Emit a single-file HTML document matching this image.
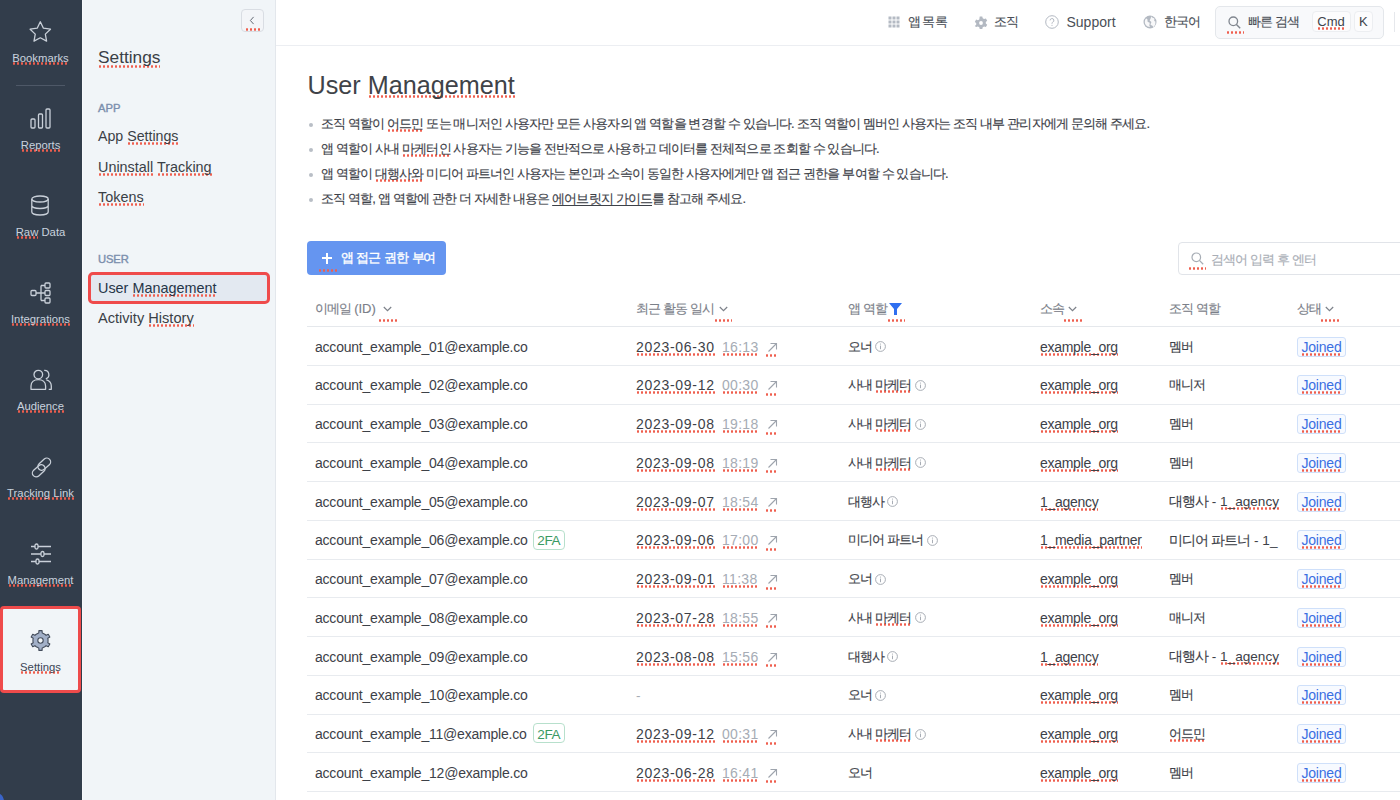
<!DOCTYPE html>
<html><head><meta charset="utf-8"><title>User Management</title>
<style>
html,body{margin:0;padding:0;}
body{width:1400px;height:800px;overflow:hidden;position:relative;background:#fff;font-family:"Liberation Sans",sans-serif;}
.b{position:absolute;}
.b svg{display:block;}
.t{position:absolute;white-space:nowrap;line-height:1.2;}
.bl{display:inline-block;width:0;height:0;vertical-align:baseline;}
.sp{padding-bottom:1px;background-image:radial-gradient(circle,#ef5e4e 1px,rgba(239,94,78,0) 1.4px);background-size:4px 3px;background-repeat:repeat-x;background-position:0 100%;}
.spd{background-image:radial-gradient(circle,#ef5e4e 1px,rgba(239,94,78,0) 1.4px);background-size:4px 3px;background-repeat:repeat-x;}
</style></head><body>
<div class='b ' style="left:0;top:0;width:82px;height:800px;background:#323d4b;"></div>
<div class='b ' style="left:82px;top:0;width:1px;height:800px;background:#f7f9fb;"></div>
<div class='b ' style="left:30px;top:21px;width:23px;height:23px;"><svg width='23' height='23' viewBox='0 0 23 23' style='overflow:visible'><path d='M10.30 0.80 L13.42 7.21 L20.48 8.19 L15.34 13.14 L16.59 20.16 L10.30 16.80 L4.01 20.16 L5.26 13.14 L0.12 8.19 L7.18 7.21Z' fill='none' stroke='#c9d0d9' stroke-width='1.3' stroke-linejoin='round'/></svg></div>
<div class='t ' style="left:0px;top:52.01px;font-size:11.3px;color:#c9d2de;width:81px;text-align:center;"><span class='sp'>Bookmarks</span></div>
<div class='b ' style="left:30px;top:108px;width:23px;height:23px;"><svg width='23' height='23' viewBox='0 0 23 23' style='overflow:visible'><g fill='none' stroke='#c9d0d9' stroke-width='1.3'><rect x='1' y='11' width='4' height='9' rx='1'/><rect x='8.5' y='6' width='4' height='14' rx='1'/><rect x='16' y='1' width='4' height='19' rx='1'/></g></svg></div>
<div class='t ' style="left:0px;top:139.01px;font-size:11.3px;color:#c9d2de;width:81px;text-align:center;"><span class='sp'>Reports</span></div>
<div class='b ' style="left:30px;top:195px;width:23px;height:23px;"><svg width='23' height='23' viewBox='0 0 23 23' style='overflow:visible'><g fill='none' stroke='#c9d0d9' stroke-width='1.3'><ellipse cx='10' cy='4' rx='8.2' ry='3'/><path d='M1.8 4v13c0 1.7 3.7 3 8.2 3s8.2-1.3 8.2-3V4M1.8 10.5c0 1.7 3.7 3 8.2 3s8.2-1.3 8.2-3'/></g></svg></div>
<div class='t ' style="left:0px;top:226.01px;font-size:11.3px;color:#c9d2de;width:81px;text-align:center;"><span class='sp'>Raw</span> Data</div>
<div class='b ' style="left:30px;top:282px;width:23px;height:23px;"><svg width='23' height='23' viewBox='0 0 23 23' style='overflow:visible'><g fill='none' stroke='#c9d0d9' stroke-width='1.3'><rect x='1' y='8.5' width='5' height='5' rx='1'/><rect x='15' y='1' width='5' height='5' rx='1'/><rect x='15' y='8.5' width='5' height='5' rx='1'/><rect x='15' y='16' width='5' height='5' rx='1'/><path d='M6 11h5M11 3.5v15M11 3.5h4M11 11h4M11 18.5h4'/></g></svg></div>
<div class='t ' style="left:0px;top:313.01px;font-size:11.3px;color:#c9d2de;width:81px;text-align:center;"><span class='sp'>Integrations</span></div>
<div class='b ' style="left:30px;top:369px;width:23px;height:23px;"><svg width='23' height='23' viewBox='0 0 23 23' style='overflow:visible'><g fill='none' stroke='#c9d0d9' stroke-width='1.3' stroke-linejoin='round'><circle cx='8.3' cy='5.6' r='4.3'/><path d='M1 20.3V17C1 13 4.2 10.6 8.3 10.6S15.6 13 15.6 17v3.3z'/><path d='M14.2 1.4a4.3 4.3 0 0 1 1.6 8.4M16.4 10.9c3 .9 4.9 3.2 4.9 6.1v3.3h-2.6'/></g></svg></div>
<div class='t ' style="left:0px;top:400.01px;font-size:11.3px;color:#c9d2de;width:81px;text-align:center;"><span class='sp'>Audience</span></div>
<div class='b ' style="left:30px;top:456px;width:23px;height:23px;"><svg width='23' height='23' viewBox='0 0 23 23' style='overflow:visible'><g fill='none' stroke='#c9d0d9' stroke-width='1.3'><rect x='7' y='4.4' width='14.5' height='7.6' rx='3.8' transform='rotate(-42 14.25 8.2)'/><rect x='1.5' y='11' width='14.5' height='7.6' rx='3.8' transform='rotate(-42 8.75 14.8)'/></g></svg></div>
<div class='t ' style="left:0px;top:487.01px;font-size:11.3px;color:#c9d2de;width:81px;text-align:center;"><span class='sp'>Tracking Link</span></div>
<div class='b ' style="left:30px;top:543px;width:23px;height:23px;"><svg width='23' height='23' viewBox='0 0 23 23' style='overflow:visible'><g fill='none' stroke='#c9d0d9' stroke-width='1.3'><path d='M1 3.5h4M8 3.5h13M1 11h10M14 11h7M1 18.5h5M9 18.5h12'/><rect x='5' y='1' width='3' height='5' rx='1.5'/><rect x='11' y='8.5' width='3' height='5' rx='1.5'/><rect x='6' y='16' width='3' height='5' rx='1.5'/></g></svg></div>
<div class='t ' style="left:0px;top:574.01px;font-size:11.3px;color:#c9d2de;width:81px;text-align:center;"><span class='sp'>Management</span></div>
<div class='b ' style="left:16px;top:84.5px;width:49px;height:1.5px;background:#4e5867;"></div>
<div class='b ' style="left:0;top:606px;width:81px;height:87px;box-sizing:border-box;border:3px solid #ef4b4b;border-radius:4px;background:#f1f5f8;"></div>
<div class='b ' style="left:29.6px;top:629.8px;width:21px;height:21px;"><svg width='21' height='21' viewBox='0 0 21 21'><path d='M7.65 3.45 L8.79 3.09 L8.94 0.62 L12.06 0.62 L12.21 3.09 L13.35 3.45 L15.18 4.51 L16.06 5.32 L18.27 4.21 L19.84 6.92 L17.77 8.28 L18.03 9.44 L18.03 11.56 L17.77 12.72 L19.84 14.08 L18.27 16.79 L16.06 15.68 L15.18 16.49 L13.35 17.55 L12.21 17.91 L12.06 20.38 L8.94 20.38 L8.79 17.91 L7.65 17.55 L5.82 16.49 L4.94 15.68 L2.73 16.79 L1.16 14.08 L3.23 12.72 L2.97 11.56 L2.97 9.44 L3.23 8.28 L1.16 6.92 L2.73 4.21 L4.94 5.32 L5.82 4.51Z' fill='#a2b0c8' stroke='#434c5b' stroke-width='1.1' stroke-linejoin='round'/><circle cx='10.5' cy='10.5' r='2.7' fill='#f1f5f8' stroke='#434c5b' stroke-width='1.1'/></svg></div>
<div class='b ' style="left:-12px;top:793px;width:16px;height:16px;border-radius:50%;background:#3a64c8;"></div>
<div class='t ' style="left:0px;top:661.01px;font-size:11.3px;color:#3b4656;width:81px;text-align:center;"><span class='sp'>Settings</span></div>
<div class='b ' style="left:83px;top:0;width:192px;height:800px;background:#f1f5f8;"></div>
<div class='b ' style="left:275px;top:0;width:1px;height:800px;background:#e3e7ec;"></div>
<div class='b ' style="left:241px;top:9px;width:23px;height:23px;box-sizing:border-box;border:1px solid #d9dde3;border-radius:4px;background:#f3f5f8;"><svg width='21' height='21' viewBox='0 0 21 21' style='position:absolute;left:0;top:0'><path d='M11.6 6.9L8.4 10.5l3.2 3.6' fill='none' stroke='#646a75' stroke-width='1'/></svg></div>
<div class='b spd' style="left:244.5px;top:28px;width:16px;height:3px;"></div>
<div class='t ' style="left:98px;top:47.00px;font-size:17.3px;color:#3a3f46;"><span class='sp'>Settings</span></div>
<div class='t ' style="left:98px;top:101.51px;font-size:11.2px;color:#7b8fad;-webkit-text-stroke:0.4px #7b8fad;letter-spacing:0.1px;">APP</div>
<div class='t ' style="left:98px;top:128.01px;font-size:14.2px;color:#3a3f46;">App <span class='sp'>Settings</span></div>
<div class='t ' style="left:98px;top:158.51px;font-size:14.4px;color:#3a3f46;"><span class='sp'>Uninstall</span> <span class='sp'>Tracking</span></div>
<div class='t ' style="left:98px;top:189.01px;font-size:14.4px;color:#3a3f46;"><span class='sp'>Tokens</span></div>
<div class='t ' style="left:98px;top:253.01px;font-size:11.2px;color:#7b8fad;-webkit-text-stroke:0.4px #7b8fad;letter-spacing:-0.1px;">USER</div>
<div class='b ' style="left:88px;top:272px;width:182px;height:32px;box-sizing:border-box;border:3px solid #ef4b4b;border-radius:5px;background:#e3e9f1;"></div>
<div class='t ' style="left:98px;top:279.51px;font-size:14.4px;color:#263548;">User <span class='sp'>Management</span></div>
<div class='t ' style="left:98px;top:310.01px;font-size:14.6px;color:#3a3f46;">Activity <span class='sp'>History</span></div>
<div class='b ' style="left:276px;top:45px;width:1124px;height:1px;background:#eceef2;"></div>
<div class='b ' style="left:888px;top:16px;width:12px;height:12px;"><svg width='12' height='12' viewBox='0 0 12 12' fill='#b4bac3'><rect x='0.5' y='0.5' width='3' height='3'/><rect x='0.5' y='4.5' width='3' height='3'/><rect x='0.5' y='8.5' width='3' height='3'/><rect x='4.5' y='0.5' width='3' height='3'/><rect x='4.5' y='4.5' width='3' height='3'/><rect x='4.5' y='8.5' width='3' height='3'/><rect x='8.5' y='0.5' width='3' height='3'/><rect x='8.5' y='4.5' width='3' height='3'/><rect x='8.5' y='8.5' width='3' height='3'/></svg></div>
<div class='t ' style="left:907.5px;top:13.71px;font-size:13px;color:#4a4f57;letter-spacing:-0.86px;-webkit-text-stroke:0.15px currentColor;">앱 목록</div>
<div class='b ' style="left:973.5px;top:15.5px;width:14px;height:14px;"><svg width='14' height='14' viewBox='0 0 14 14'><path d='M5.7.5h2.6l.4 1.8 1.4.8 1.8-.6 1.3 2.3-1.4 1.2v1.6l1.4 1.2-1.3 2.3-1.8-.6-1.4.8-.4 1.8H5.7l-.4-1.8-1.4-.8-1.8.6L.8 9.9l1.4-1.2V7.1L.8 5.9l1.3-2.3 1.8.6 1.4-.8z' fill='#b3b9c2'/><circle cx='7' cy='7' r='1.9' fill='#fff'/></svg></div>
<div class='t ' style="left:994px;top:13.71px;font-size:13px;color:#4a4f57;letter-spacing:-0.86px;-webkit-text-stroke:0.15px currentColor;">조직</div>
<div class='b ' style="left:1045px;top:15px;width:14px;height:14px;"><svg width='14' height='14' viewBox='0 0 14 14'><circle cx='7' cy='7' r='6.3' fill='none' stroke='#b3b9c2' stroke-width='1'/><path d='M5.1 5.4a1.9 1.9 0 1 1 2.6 1.8c-.5.2-.7.6-.7 1.1v.5' fill='none' stroke='#b3b9c2' stroke-width='1'/><circle cx='7' cy='10.3' r='.6' fill='#b3b9c2'/></svg></div>
<div class='t ' style="left:1066.5px;top:13.51px;font-size:14px;color:#4a4f57;">Support</div>
<div class='b ' style="left:1142.5px;top:15px;width:14px;height:14px;"><svg width='14' height='14' viewBox='0 0 14 14'><circle cx='7' cy='7' r='6.5' fill='#b3b9c2'/><path d='M3 3.5c1.2.3 1.8 1.2 1.5 2.2-.3.9.6 1.5 1.4 1.6.9.2 1 1.3.6 2.1-.4.8.1 1.8.9 2.6-2.3 0-4.7-1.4-5.4-3.6C1.5 6.6 2 4.8 3 3.5zM8.5 1.2c.3 1 .9 1.6 1.9 1.7 1 .1 1.3 1.1.9 2-.3.7.2 1.5 1 1.4.5 2.4-.2 4.5-2 6-.2-1.1-.9-1.8-1.9-2-1-.3-1-1.4-.4-2.1.5-.7.3-1.7-.5-2-.8-.3-1-1.2-.4-1.8.4-.4.6-.8.5-1.2z' fill='#fff' opacity='.9'/></svg></div>
<div class='t ' style="left:1163.5px;top:13.71px;font-size:13px;color:#4a4f57;letter-spacing:-0.86px;-webkit-text-stroke:0.15px currentColor;">한국어</div>
<div class='b ' style="left:1215px;top:5.5px;width:169px;height:33px;box-sizing:border-box;border:1px solid #e4e7eb;border-radius:5px;background:#f8f9fb;"></div>
<div class='b ' style="left:1227.5px;top:15.5px;width:13px;height:13px;"><svg width='13' height='13' viewBox='0 0 13 13'><circle cx='5.3' cy='5.3' r='4.3' fill='none' stroke='#80868f' stroke-width='1.3'/><path d='M8.4 8.4l3.8 3.8' stroke='#80868f' stroke-width='1.4'/></svg></div>
<div class='b spd' style="left:1226px;top:31px;width:18px;height:3px;"></div>
<div class='t ' style="left:1248px;top:13.71px;font-size:13px;color:#4a4f57;letter-spacing:-0.86px;-webkit-text-stroke:0.15px currentColor;">빠른 검색</div>
<div class='b ' style="left:1311.5px;top:11px;width:39px;height:21px;box-sizing:border-box;border:1px solid #eceef1;border-radius:4px;background:#fcfcfd;"></div>
<div class='t ' style="left:1311.5px;top:14.01px;font-size:13px;color:#3f444b;width:39px;text-align:center;"><span class='sp'>Cmd</span></div>
<div class='b ' style="left:1354px;top:11px;width:18.5px;height:21px;box-sizing:border-box;border:1px solid #eceef1;border-radius:4px;background:#fcfcfd;"></div>
<div class='t ' style="left:1354px;top:14.01px;font-size:13px;color:#3f444b;width:18.5px;text-align:center;">K</div>
<div class='b ' style="left:1394px;top:11.5px;width:1px;height:20px;background:#e6e8ec;"></div>
<div class='t ' style="left:307.5px;top:70.30px;font-size:25.2px;color:#404348;">User <span class="sp" style="padding-bottom:0;background-position:0 calc(100% - 1.5px)">Management</span></div>
<div class='b ' style="left:308.5px;top:122.7px;width:4px;height:4px;border-radius:50%;background:#b9bec6;"></div>
<div class='t ' style="left:321px;top:116.21px;font-size:13px;color:#3d4148;letter-spacing:-0.86px;-webkit-text-stroke:0.15px currentColor;">조직 역할이 <span class='sp'>어드민</span> 또는 매니저인 사용자만 모든 사용자의 앱 역할을 변경할 수 있습니다. 조직 역할이 멤버인 사용자는 조직 내부 관리자에게 문의해 주세요.</div>
<div class='b ' style="left:308.5px;top:147.7px;width:4px;height:4px;border-radius:50%;background:#b9bec6;"></div>
<div class='t ' style="left:321px;top:141.21px;font-size:13px;color:#3d4148;letter-spacing:-0.86px;-webkit-text-stroke:0.15px currentColor;">앱 역할이 사내 <span class='sp'>마케터인</span> 사용자는 기능을 전반적으로 사용하고 데이터를 전체적으로 조회할 수 있습니다.</div>
<div class='b ' style="left:308.5px;top:172.7px;width:4px;height:4px;border-radius:50%;background:#b9bec6;"></div>
<div class='t ' style="left:321px;top:166.21px;font-size:13px;color:#3d4148;letter-spacing:-0.86px;-webkit-text-stroke:0.15px currentColor;">앱 역할이 <span class='sp'>대행사와</span> 미디어 파트너인 사용자는 본인과 소속이 동일한 사용자에게만 앱 접근 권한을 부여할 수 있습니다.</div>
<div class='b ' style="left:308.5px;top:197.7px;width:4px;height:4px;border-radius:50%;background:#b9bec6;"></div>
<div class='t ' style="left:321px;top:191.21px;font-size:13px;color:#3d4148;letter-spacing:-0.86px;-webkit-text-stroke:0.15px currentColor;">조직 역할, 앱 역할에 관한 더 자세한 내용은 <span style="text-decoration:underline;text-underline-offset:2px">에어브릿지 가이드</span>를 참고해 주세요.</div>
<div class='b ' style="left:307px;top:241px;width:139px;height:34px;border-radius:4px;background:#6595f0;"></div>
<div class='b ' style="left:321.5px;top:257.4px;width:10.5px;height:1.6px;background:#fff;"></div>
<div class='b ' style="left:325.95px;top:253px;width:1.6px;height:10.5px;background:#fff;"></div>
<div class='b spd' style="left:317.5px;top:268.5px;width:20px;height:3px;"></div>
<div class='t ' style="left:340.5px;top:250.21px;font-size:13px;color:#ffffff;letter-spacing:-1.2px;word-spacing:1.6px;-webkit-text-stroke:0.35px #fff;">앱 접근 권한 부여</div>
<div class='b ' style="left:1177.5px;top:242px;width:240px;height:32.5px;box-sizing:border-box;border:1px solid #e1e4e9;border-radius:4px;background:#fff;"></div>
<div class='b ' style="left:1190.5px;top:252px;width:13px;height:13px;"><svg width='13' height='13' viewBox='0 0 13 13'><circle cx='5.3' cy='5.3' r='4.3' fill='none' stroke='#a7adb5' stroke-width='1.2'/><path d='M8.4 8.4l3.8 3.8' stroke='#a7adb5' stroke-width='1.3'/></svg></div>
<div class='b spd' style="left:1187.5px;top:267px;width:18.5px;height:3px;"></div>
<div class='t ' style="left:1210.5px;top:251.51px;font-size:13px;color:#a9aeb6;letter-spacing:-0.86px;-webkit-text-stroke:0.15px currentColor;">검색어 입력 후 엔터</div>
<div class='t ' style="left:315px;top:301.21px;font-size:13px;color:#7b8089;letter-spacing:-0.86px;-webkit-text-stroke:0.15px currentColor;">이메일 <span style="letter-spacing:0">(ID)</span></div>
<div class='t ' style="left:636px;top:301.21px;font-size:13px;color:#7b8089;letter-spacing:-0.86px;-webkit-text-stroke:0.15px currentColor;">최근 활동 일시</div>
<div class='t ' style="left:848px;top:301.21px;font-size:13px;color:#7b8089;letter-spacing:-0.86px;-webkit-text-stroke:0.15px currentColor;">앱 역할</div>
<div class='t ' style="left:1040px;top:301.21px;font-size:13px;color:#7b8089;letter-spacing:-0.86px;-webkit-text-stroke:0.15px currentColor;">소속</div>
<div class='t ' style="left:1168.5px;top:301.21px;font-size:13px;color:#7b8089;letter-spacing:-0.86px;-webkit-text-stroke:0.15px currentColor;">조직 역할</div>
<div class='t ' style="left:1297px;top:301.21px;font-size:13px;color:#7b8089;letter-spacing:-0.86px;-webkit-text-stroke:0.15px currentColor;">상태</div>
<div class='b ' style="left:383px;top:306px;width:9px;height:6px;"><svg width='9' height='6' viewBox='0 0 9 6'><path d='M.8 1l3.7 3.7L8.2 1' fill='none' stroke='#7d828a' stroke-width='1.2'/></svg></div>
<div class='b spd' style="left:378px;top:318.5px;width:18.5px;height:3px;"></div>
<div class='b ' style="left:718.5px;top:306px;width:9px;height:6px;"><svg width='9' height='6' viewBox='0 0 9 6'><path d='M.8 1l3.7 3.7L8.2 1' fill='none' stroke='#7d828a' stroke-width='1.2'/></svg></div>
<div class='b spd' style="left:713.5px;top:318.5px;width:18.5px;height:3px;"></div>
<div class='b ' style="left:1068px;top:306px;width:9px;height:6px;"><svg width='9' height='6' viewBox='0 0 9 6'><path d='M.8 1l3.7 3.7L8.2 1' fill='none' stroke='#7d828a' stroke-width='1.2'/></svg></div>
<div class='b spd' style="left:1063px;top:318.5px;width:18.5px;height:3px;"></div>
<div class='b ' style="left:1325px;top:306px;width:9px;height:6px;"><svg width='9' height='6' viewBox='0 0 9 6'><path d='M.8 1l3.7 3.7L8.2 1' fill='none' stroke='#7d828a' stroke-width='1.2'/></svg></div>
<div class='b spd' style="left:1320px;top:318.5px;width:18.5px;height:3px;"></div>
<div class='b ' style="left:889px;top:302.5px;width:13px;height:12px;"><svg width='13' height='12' viewBox='0 0 13 12'><path d='M0 0h13L8 6v6H5V6z' fill='#2f6ff0'/></svg></div>
<div class='b spd' style="left:886.5px;top:318.5px;width:18.5px;height:3px;"></div>
<div class='b ' style="left:307px;top:326px;width:1093px;height:1px;background:#e5e8ec;"></div>
<div class='t ' style="left:315px;top:338.51px;font-size:14px;color:#3d4148;letter-spacing:-0.22px;">account_example_01@example.co</div>
<div class='t ' style="left:636px;top:338.51px;font-size:14px;color:#3d4148;letter-spacing:0.7px;"><span class='sp'>2023-06-30</span></div>
<div class='t ' style="left:722px;top:338.51px;font-size:14px;color:#a6acb5;letter-spacing:0.3px;"><span class='sp'>16:13</span></div>
<div class='b ' style="left:766.5px;top:341.50px;width:11px;height:11px;"><svg width='11' height='11' viewBox='0 0 11 11'><path d='M1.5 9.5L9.5 1.5M3.5 1.5h6v6' fill='none' stroke='#9ea4ad' stroke-width='1.1'/></svg></div>
<div class='b spd' style="left:765px;top:354.00px;width:13px;height:3px;"></div>
<div class='t ' style="left:848px;top:338.51px;font-size:13px;color:#3d4148;letter-spacing:-0.86px;-webkit-text-stroke:0.15px currentColor;">오너</div>
<div class='b ' style="left:875.2px;top:341.20px;width:11px;height:11px;"><svg width='11' height='11' viewBox='0 0 11 11' style=''><circle cx='5.5' cy='5.5' r='4.9' fill='none' stroke='#9ea4ad' stroke-width='.9'/><path d='M5.5 4.6v3.6' stroke='#9ea4ad' stroke-width='.9'/><circle cx='5.5' cy='3' r='.6' fill='#9ea4ad'/></svg></div>
<div class='t ' style="left:1040px;top:338.51px;font-size:14px;color:#3d4148;letter-spacing:-0.29px;"><span class='sp'>example_org</span></div>
<div class='t ' style="left:1168.5px;top:338.51px;font-size:13px;color:#3d4148;letter-spacing:-0.86px;-webkit-text-stroke:0.15px currentColor;">멤버</div>
<div class='b ' style="left:1297px;top:336.50px;width:49px;height:20px;box-sizing:border-box;border:1px solid #cfe0fa;border-radius:3px;background:#f7faff;"></div>
<div class='t ' style="left:1297px;top:338.51px;font-size:14px;color:#3a6fe2;width:49px;text-align:center;letter-spacing:-0.2px;"><span class='sp'>Joined</span></div>
<div class='b ' style="left:307px;top:364.75px;width:1093px;height:1px;background:#e8ebef;"></div>
<div class='t ' style="left:315px;top:377.26px;font-size:14px;color:#3d4148;letter-spacing:-0.22px;">account_example_02@example.co</div>
<div class='t ' style="left:636px;top:377.26px;font-size:14px;color:#3d4148;letter-spacing:0.7px;"><span class='sp'>2023-09-12</span></div>
<div class='t ' style="left:722px;top:377.26px;font-size:14px;color:#a6acb5;letter-spacing:0.3px;"><span class='sp'>00:30</span></div>
<div class='b ' style="left:766.5px;top:380.25px;width:11px;height:11px;"><svg width='11' height='11' viewBox='0 0 11 11'><path d='M1.5 9.5L9.5 1.5M3.5 1.5h6v6' fill='none' stroke='#9ea4ad' stroke-width='1.1'/></svg></div>
<div class='b spd' style="left:765px;top:392.75px;width:13px;height:3px;"></div>
<div class='t ' style="left:848px;top:377.26px;font-size:13px;color:#3d4148;letter-spacing:-0.86px;-webkit-text-stroke:0.15px currentColor;">사내 <span class='sp'>마케터</span></div>
<div class='b ' style="left:914.6px;top:379.95px;width:11px;height:11px;"><svg width='11' height='11' viewBox='0 0 11 11' style=''><circle cx='5.5' cy='5.5' r='4.9' fill='none' stroke='#9ea4ad' stroke-width='.9'/><path d='M5.5 4.6v3.6' stroke='#9ea4ad' stroke-width='.9'/><circle cx='5.5' cy='3' r='.6' fill='#9ea4ad'/></svg></div>
<div class='t ' style="left:1040px;top:377.26px;font-size:14px;color:#3d4148;letter-spacing:-0.29px;"><span class='sp'>example_org</span></div>
<div class='t ' style="left:1168.5px;top:377.26px;font-size:13px;color:#3d4148;letter-spacing:-0.86px;-webkit-text-stroke:0.15px currentColor;">매니저</div>
<div class='b ' style="left:1297px;top:375.25px;width:49px;height:20px;box-sizing:border-box;border:1px solid #cfe0fa;border-radius:3px;background:#f7faff;"></div>
<div class='t ' style="left:1297px;top:377.26px;font-size:14px;color:#3a6fe2;width:49px;text-align:center;letter-spacing:-0.2px;"><span class='sp'>Joined</span></div>
<div class='b ' style="left:307px;top:403.50px;width:1093px;height:1px;background:#e8ebef;"></div>
<div class='t ' style="left:315px;top:416.01px;font-size:14px;color:#3d4148;letter-spacing:-0.22px;">account_example_03@example.co</div>
<div class='t ' style="left:636px;top:416.01px;font-size:14px;color:#3d4148;letter-spacing:0.7px;"><span class='sp'>2023-09-08</span></div>
<div class='t ' style="left:722px;top:416.01px;font-size:14px;color:#a6acb5;letter-spacing:0.3px;"><span class='sp'>19:18</span></div>
<div class='b ' style="left:766.5px;top:419.00px;width:11px;height:11px;"><svg width='11' height='11' viewBox='0 0 11 11'><path d='M1.5 9.5L9.5 1.5M3.5 1.5h6v6' fill='none' stroke='#9ea4ad' stroke-width='1.1'/></svg></div>
<div class='b spd' style="left:765px;top:431.50px;width:13px;height:3px;"></div>
<div class='t ' style="left:848px;top:416.01px;font-size:13px;color:#3d4148;letter-spacing:-0.86px;-webkit-text-stroke:0.15px currentColor;">사내 <span class='sp'>마케터</span></div>
<div class='b ' style="left:914.6px;top:418.70px;width:11px;height:11px;"><svg width='11' height='11' viewBox='0 0 11 11' style=''><circle cx='5.5' cy='5.5' r='4.9' fill='none' stroke='#9ea4ad' stroke-width='.9'/><path d='M5.5 4.6v3.6' stroke='#9ea4ad' stroke-width='.9'/><circle cx='5.5' cy='3' r='.6' fill='#9ea4ad'/></svg></div>
<div class='t ' style="left:1040px;top:416.01px;font-size:14px;color:#3d4148;letter-spacing:-0.29px;"><span class='sp'>example_org</span></div>
<div class='t ' style="left:1168.5px;top:416.01px;font-size:13px;color:#3d4148;letter-spacing:-0.86px;-webkit-text-stroke:0.15px currentColor;">멤버</div>
<div class='b ' style="left:1297px;top:414.00px;width:49px;height:20px;box-sizing:border-box;border:1px solid #cfe0fa;border-radius:3px;background:#f7faff;"></div>
<div class='t ' style="left:1297px;top:416.01px;font-size:14px;color:#3a6fe2;width:49px;text-align:center;letter-spacing:-0.2px;"><span class='sp'>Joined</span></div>
<div class='b ' style="left:307px;top:442.25px;width:1093px;height:1px;background:#e8ebef;"></div>
<div class='t ' style="left:315px;top:454.76px;font-size:14px;color:#3d4148;letter-spacing:-0.22px;">account_example_04@example.co</div>
<div class='t ' style="left:636px;top:454.76px;font-size:14px;color:#3d4148;letter-spacing:0.7px;"><span class='sp'>2023-09-08</span></div>
<div class='t ' style="left:722px;top:454.76px;font-size:14px;color:#a6acb5;letter-spacing:0.3px;"><span class='sp'>18:19</span></div>
<div class='b ' style="left:766.5px;top:457.75px;width:11px;height:11px;"><svg width='11' height='11' viewBox='0 0 11 11'><path d='M1.5 9.5L9.5 1.5M3.5 1.5h6v6' fill='none' stroke='#9ea4ad' stroke-width='1.1'/></svg></div>
<div class='b spd' style="left:765px;top:470.25px;width:13px;height:3px;"></div>
<div class='t ' style="left:848px;top:454.76px;font-size:13px;color:#3d4148;letter-spacing:-0.86px;-webkit-text-stroke:0.15px currentColor;">사내 <span class='sp'>마케터</span></div>
<div class='b ' style="left:914.6px;top:457.45px;width:11px;height:11px;"><svg width='11' height='11' viewBox='0 0 11 11' style=''><circle cx='5.5' cy='5.5' r='4.9' fill='none' stroke='#9ea4ad' stroke-width='.9'/><path d='M5.5 4.6v3.6' stroke='#9ea4ad' stroke-width='.9'/><circle cx='5.5' cy='3' r='.6' fill='#9ea4ad'/></svg></div>
<div class='t ' style="left:1040px;top:454.76px;font-size:14px;color:#3d4148;letter-spacing:-0.29px;"><span class='sp'>example_org</span></div>
<div class='t ' style="left:1168.5px;top:454.76px;font-size:13px;color:#3d4148;letter-spacing:-0.86px;-webkit-text-stroke:0.15px currentColor;">멤버</div>
<div class='b ' style="left:1297px;top:452.75px;width:49px;height:20px;box-sizing:border-box;border:1px solid #cfe0fa;border-radius:3px;background:#f7faff;"></div>
<div class='t ' style="left:1297px;top:454.76px;font-size:14px;color:#3a6fe2;width:49px;text-align:center;letter-spacing:-0.2px;"><span class='sp'>Joined</span></div>
<div class='b ' style="left:307px;top:481.00px;width:1093px;height:1px;background:#e8ebef;"></div>
<div class='t ' style="left:315px;top:493.51px;font-size:14px;color:#3d4148;letter-spacing:-0.22px;">account_example_05@example.co</div>
<div class='t ' style="left:636px;top:493.51px;font-size:14px;color:#3d4148;letter-spacing:0.7px;"><span class='sp'>2023-09-07</span></div>
<div class='t ' style="left:722px;top:493.51px;font-size:14px;color:#a6acb5;letter-spacing:0.3px;"><span class='sp'>18:54</span></div>
<div class='b ' style="left:766.5px;top:496.50px;width:11px;height:11px;"><svg width='11' height='11' viewBox='0 0 11 11'><path d='M1.5 9.5L9.5 1.5M3.5 1.5h6v6' fill='none' stroke='#9ea4ad' stroke-width='1.1'/></svg></div>
<div class='b spd' style="left:765px;top:509.00px;width:13px;height:3px;"></div>
<div class='t ' style="left:848px;top:493.51px;font-size:13px;color:#3d4148;letter-spacing:-0.86px;-webkit-text-stroke:0.15px currentColor;">대행사</div>
<div class='b ' style="left:886.95px;top:496.20px;width:11px;height:11px;"><svg width='11' height='11' viewBox='0 0 11 11' style=''><circle cx='5.5' cy='5.5' r='4.9' fill='none' stroke='#9ea4ad' stroke-width='.9'/><path d='M5.5 4.6v3.6' stroke='#9ea4ad' stroke-width='.9'/><circle cx='5.5' cy='3' r='.6' fill='#9ea4ad'/></svg></div>
<div class='t ' style="left:1040px;top:493.51px;font-size:14px;color:#3d4148;letter-spacing:-0.29px;"><span class='sp'>1_agency</span></div>
<div class='t ' style="left:1168.5px;top:494.00px;font-size:13.6px;color:#3d4148;"><span style="letter-spacing:-0.86px;-webkit-text-stroke:0.15px currentColor;">대행사</span> - <span class='sp'>1_agency</span></div>
<div class='b ' style="left:1297px;top:491.50px;width:49px;height:20px;box-sizing:border-box;border:1px solid #cfe0fa;border-radius:3px;background:#f7faff;"></div>
<div class='t ' style="left:1297px;top:493.51px;font-size:14px;color:#3a6fe2;width:49px;text-align:center;letter-spacing:-0.2px;"><span class='sp'>Joined</span></div>
<div class='b ' style="left:307px;top:519.75px;width:1093px;height:1px;background:#e8ebef;"></div>
<div class='t ' style="left:315px;top:532.26px;font-size:14px;color:#3d4148;letter-spacing:-0.22px;">account_example_06@example.co</div>
<div class='b ' style="left:533px;top:529.55px;width:31.5px;height:20px;box-sizing:border-box;border:1px solid #b7e0cc;border-radius:4px;background:#fff;"></div>
<div class='t ' style="left:533px;top:532.96px;font-size:13.5px;color:#3a9a62;width:31.5px;text-align:center;letter-spacing:-0.3px;">2FA</div>
<div class='t ' style="left:636px;top:532.26px;font-size:14px;color:#3d4148;letter-spacing:0.7px;"><span class='sp'>2023-09-06</span></div>
<div class='t ' style="left:722px;top:532.26px;font-size:14px;color:#a6acb5;letter-spacing:0.3px;"><span class='sp'>17:00</span></div>
<div class='b ' style="left:766.5px;top:535.25px;width:11px;height:11px;"><svg width='11' height='11' viewBox='0 0 11 11'><path d='M1.5 9.5L9.5 1.5M3.5 1.5h6v6' fill='none' stroke='#9ea4ad' stroke-width='1.1'/></svg></div>
<div class='b spd' style="left:765px;top:547.75px;width:13px;height:3px;"></div>
<div class='t ' style="left:848px;top:532.26px;font-size:13px;color:#3d4148;letter-spacing:-0.86px;-webkit-text-stroke:0.15px currentColor;">미디어 파트너</div>
<div class='b ' style="left:926.7px;top:534.95px;width:11px;height:11px;"><svg width='11' height='11' viewBox='0 0 11 11' style=''><circle cx='5.5' cy='5.5' r='4.9' fill='none' stroke='#9ea4ad' stroke-width='.9'/><path d='M5.5 4.6v3.6' stroke='#9ea4ad' stroke-width='.9'/><circle cx='5.5' cy='3' r='.6' fill='#9ea4ad'/></svg></div>
<div class='t ' style="left:1040px;top:532.26px;font-size:14px;color:#3d4148;letter-spacing:-0.29px;"><span class='sp'>1_media_partner</span></div>
<div class='t ' style="left:1168.5px;top:532.75px;font-size:13.6px;color:#3d4148;"><span style="letter-spacing:-0.86px;-webkit-text-stroke:0.15px currentColor;">미디어 파트너</span> - 1_</div>
<div class='b ' style="left:1297px;top:530.25px;width:49px;height:20px;box-sizing:border-box;border:1px solid #cfe0fa;border-radius:3px;background:#f7faff;"></div>
<div class='t ' style="left:1297px;top:532.26px;font-size:14px;color:#3a6fe2;width:49px;text-align:center;letter-spacing:-0.2px;"><span class='sp'>Joined</span></div>
<div class='b ' style="left:307px;top:558.50px;width:1093px;height:1px;background:#e8ebef;"></div>
<div class='t ' style="left:315px;top:571.01px;font-size:14px;color:#3d4148;letter-spacing:-0.22px;">account_example_07@example.co</div>
<div class='t ' style="left:636px;top:571.01px;font-size:14px;color:#3d4148;letter-spacing:0.7px;"><span class='sp'>2023-09-01</span></div>
<div class='t ' style="left:722px;top:571.01px;font-size:14px;color:#a6acb5;letter-spacing:0.3px;"><span class='sp'>11:38</span></div>
<div class='b ' style="left:766.5px;top:574.00px;width:11px;height:11px;"><svg width='11' height='11' viewBox='0 0 11 11'><path d='M1.5 9.5L9.5 1.5M3.5 1.5h6v6' fill='none' stroke='#9ea4ad' stroke-width='1.1'/></svg></div>
<div class='b spd' style="left:765px;top:586.50px;width:13px;height:3px;"></div>
<div class='t ' style="left:848px;top:571.01px;font-size:13px;color:#3d4148;letter-spacing:-0.86px;-webkit-text-stroke:0.15px currentColor;">오너</div>
<div class='b ' style="left:875.2px;top:573.70px;width:11px;height:11px;"><svg width='11' height='11' viewBox='0 0 11 11' style=''><circle cx='5.5' cy='5.5' r='4.9' fill='none' stroke='#9ea4ad' stroke-width='.9'/><path d='M5.5 4.6v3.6' stroke='#9ea4ad' stroke-width='.9'/><circle cx='5.5' cy='3' r='.6' fill='#9ea4ad'/></svg></div>
<div class='t ' style="left:1040px;top:571.01px;font-size:14px;color:#3d4148;letter-spacing:-0.29px;"><span class='sp'>example_org</span></div>
<div class='t ' style="left:1168.5px;top:571.01px;font-size:13px;color:#3d4148;letter-spacing:-0.86px;-webkit-text-stroke:0.15px currentColor;">멤버</div>
<div class='b ' style="left:1297px;top:569.00px;width:49px;height:20px;box-sizing:border-box;border:1px solid #cfe0fa;border-radius:3px;background:#f7faff;"></div>
<div class='t ' style="left:1297px;top:571.01px;font-size:14px;color:#3a6fe2;width:49px;text-align:center;letter-spacing:-0.2px;"><span class='sp'>Joined</span></div>
<div class='b ' style="left:307px;top:597.25px;width:1093px;height:1px;background:#e8ebef;"></div>
<div class='t ' style="left:315px;top:609.76px;font-size:14px;color:#3d4148;letter-spacing:-0.22px;">account_example_08@example.co</div>
<div class='t ' style="left:636px;top:609.76px;font-size:14px;color:#3d4148;letter-spacing:0.7px;"><span class='sp'>2023-07-28</span></div>
<div class='t ' style="left:722px;top:609.76px;font-size:14px;color:#a6acb5;letter-spacing:0.3px;"><span class='sp'>18:55</span></div>
<div class='b ' style="left:766.5px;top:612.75px;width:11px;height:11px;"><svg width='11' height='11' viewBox='0 0 11 11'><path d='M1.5 9.5L9.5 1.5M3.5 1.5h6v6' fill='none' stroke='#9ea4ad' stroke-width='1.1'/></svg></div>
<div class='b spd' style="left:765px;top:625.25px;width:13px;height:3px;"></div>
<div class='t ' style="left:848px;top:609.76px;font-size:13px;color:#3d4148;letter-spacing:-0.86px;-webkit-text-stroke:0.15px currentColor;">사내 <span class='sp'>마케터</span></div>
<div class='b ' style="left:914.6px;top:612.45px;width:11px;height:11px;"><svg width='11' height='11' viewBox='0 0 11 11' style=''><circle cx='5.5' cy='5.5' r='4.9' fill='none' stroke='#9ea4ad' stroke-width='.9'/><path d='M5.5 4.6v3.6' stroke='#9ea4ad' stroke-width='.9'/><circle cx='5.5' cy='3' r='.6' fill='#9ea4ad'/></svg></div>
<div class='t ' style="left:1040px;top:609.76px;font-size:14px;color:#3d4148;letter-spacing:-0.29px;"><span class='sp'>example_org</span></div>
<div class='t ' style="left:1168.5px;top:609.76px;font-size:13px;color:#3d4148;letter-spacing:-0.86px;-webkit-text-stroke:0.15px currentColor;">매니저</div>
<div class='b ' style="left:1297px;top:607.75px;width:49px;height:20px;box-sizing:border-box;border:1px solid #cfe0fa;border-radius:3px;background:#f7faff;"></div>
<div class='t ' style="left:1297px;top:609.76px;font-size:14px;color:#3a6fe2;width:49px;text-align:center;letter-spacing:-0.2px;"><span class='sp'>Joined</span></div>
<div class='b ' style="left:307px;top:636.00px;width:1093px;height:1px;background:#e8ebef;"></div>
<div class='t ' style="left:315px;top:648.51px;font-size:14px;color:#3d4148;letter-spacing:-0.22px;">account_example_09@example.co</div>
<div class='t ' style="left:636px;top:648.51px;font-size:14px;color:#3d4148;letter-spacing:0.7px;"><span class='sp'>2023-08-08</span></div>
<div class='t ' style="left:722px;top:648.51px;font-size:14px;color:#a6acb5;letter-spacing:0.3px;"><span class='sp'>15:56</span></div>
<div class='b ' style="left:766.5px;top:651.50px;width:11px;height:11px;"><svg width='11' height='11' viewBox='0 0 11 11'><path d='M1.5 9.5L9.5 1.5M3.5 1.5h6v6' fill='none' stroke='#9ea4ad' stroke-width='1.1'/></svg></div>
<div class='b spd' style="left:765px;top:664.00px;width:13px;height:3px;"></div>
<div class='t ' style="left:848px;top:648.51px;font-size:13px;color:#3d4148;letter-spacing:-0.86px;-webkit-text-stroke:0.15px currentColor;">대행사</div>
<div class='b ' style="left:886.95px;top:651.20px;width:11px;height:11px;"><svg width='11' height='11' viewBox='0 0 11 11' style=''><circle cx='5.5' cy='5.5' r='4.9' fill='none' stroke='#9ea4ad' stroke-width='.9'/><path d='M5.5 4.6v3.6' stroke='#9ea4ad' stroke-width='.9'/><circle cx='5.5' cy='3' r='.6' fill='#9ea4ad'/></svg></div>
<div class='t ' style="left:1040px;top:648.51px;font-size:14px;color:#3d4148;letter-spacing:-0.29px;"><span class='sp'>1_agency</span></div>
<div class='t ' style="left:1168.5px;top:649.00px;font-size:13.6px;color:#3d4148;"><span style="letter-spacing:-0.86px;-webkit-text-stroke:0.15px currentColor;">대행사</span> - <span class='sp'>1_agency</span></div>
<div class='b ' style="left:1297px;top:646.50px;width:49px;height:20px;box-sizing:border-box;border:1px solid #cfe0fa;border-radius:3px;background:#f7faff;"></div>
<div class='t ' style="left:1297px;top:648.51px;font-size:14px;color:#3a6fe2;width:49px;text-align:center;letter-spacing:-0.2px;"><span class='sp'>Joined</span></div>
<div class='b ' style="left:307px;top:674.75px;width:1093px;height:1px;background:#e8ebef;"></div>
<div class='t ' style="left:315px;top:687.26px;font-size:14px;color:#3d4148;letter-spacing:-0.22px;">account_example_10@example.co</div>
<div class='t ' style="left:636px;top:688.25px;font-size:13.6px;color:#a6acb5;">-</div>
<div class='t ' style="left:848px;top:687.26px;font-size:13px;color:#3d4148;letter-spacing:-0.86px;-webkit-text-stroke:0.15px currentColor;">오너</div>
<div class='b ' style="left:875.2px;top:689.95px;width:11px;height:11px;"><svg width='11' height='11' viewBox='0 0 11 11' style=''><circle cx='5.5' cy='5.5' r='4.9' fill='none' stroke='#9ea4ad' stroke-width='.9'/><path d='M5.5 4.6v3.6' stroke='#9ea4ad' stroke-width='.9'/><circle cx='5.5' cy='3' r='.6' fill='#9ea4ad'/></svg></div>
<div class='t ' style="left:1040px;top:687.26px;font-size:14px;color:#3d4148;letter-spacing:-0.29px;"><span class='sp'>example_org</span></div>
<div class='t ' style="left:1168.5px;top:687.26px;font-size:13px;color:#3d4148;letter-spacing:-0.86px;-webkit-text-stroke:0.15px currentColor;">멤버</div>
<div class='b ' style="left:1297px;top:685.25px;width:49px;height:20px;box-sizing:border-box;border:1px solid #cfe0fa;border-radius:3px;background:#f7faff;"></div>
<div class='t ' style="left:1297px;top:687.26px;font-size:14px;color:#3a6fe2;width:49px;text-align:center;letter-spacing:-0.2px;"><span class='sp'>Joined</span></div>
<div class='b ' style="left:307px;top:713.50px;width:1093px;height:1px;background:#e8ebef;"></div>
<div class='t ' style="left:315px;top:726.01px;font-size:14px;color:#3d4148;letter-spacing:-0.22px;">account_example_11@example.co</div>
<div class='b ' style="left:533px;top:723.30px;width:31.5px;height:20px;box-sizing:border-box;border:1px solid #b7e0cc;border-radius:4px;background:#fff;"></div>
<div class='t ' style="left:533px;top:726.71px;font-size:13.5px;color:#3a9a62;width:31.5px;text-align:center;letter-spacing:-0.3px;">2FA</div>
<div class='t ' style="left:636px;top:726.01px;font-size:14px;color:#3d4148;letter-spacing:0.7px;"><span class='sp'>2023-09-12</span></div>
<div class='t ' style="left:722px;top:726.01px;font-size:14px;color:#a6acb5;letter-spacing:0.3px;"><span class='sp'>00:31</span></div>
<div class='b ' style="left:766.5px;top:729.00px;width:11px;height:11px;"><svg width='11' height='11' viewBox='0 0 11 11'><path d='M1.5 9.5L9.5 1.5M3.5 1.5h6v6' fill='none' stroke='#9ea4ad' stroke-width='1.1'/></svg></div>
<div class='b spd' style="left:765px;top:741.50px;width:13px;height:3px;"></div>
<div class='t ' style="left:848px;top:726.01px;font-size:13px;color:#3d4148;letter-spacing:-0.86px;-webkit-text-stroke:0.15px currentColor;">사내 <span class='sp'>마케터</span></div>
<div class='b ' style="left:914.6px;top:728.70px;width:11px;height:11px;"><svg width='11' height='11' viewBox='0 0 11 11' style=''><circle cx='5.5' cy='5.5' r='4.9' fill='none' stroke='#9ea4ad' stroke-width='.9'/><path d='M5.5 4.6v3.6' stroke='#9ea4ad' stroke-width='.9'/><circle cx='5.5' cy='3' r='.6' fill='#9ea4ad'/></svg></div>
<div class='t ' style="left:1040px;top:726.01px;font-size:14px;color:#3d4148;letter-spacing:-0.29px;"><span class='sp'>example_org</span></div>
<div class='t ' style="left:1168.5px;top:726.01px;font-size:13px;color:#3d4148;letter-spacing:-0.86px;-webkit-text-stroke:0.15px currentColor;"><span class='sp'>어드민</span></div>
<div class='b ' style="left:1297px;top:724.00px;width:49px;height:20px;box-sizing:border-box;border:1px solid #cfe0fa;border-radius:3px;background:#f7faff;"></div>
<div class='t ' style="left:1297px;top:726.01px;font-size:14px;color:#3a6fe2;width:49px;text-align:center;letter-spacing:-0.2px;"><span class='sp'>Joined</span></div>
<div class='b ' style="left:307px;top:752.25px;width:1093px;height:1px;background:#e8ebef;"></div>
<div class='t ' style="left:315px;top:764.76px;font-size:14px;color:#3d4148;letter-spacing:-0.22px;">account_example_12@example.co</div>
<div class='t ' style="left:636px;top:764.76px;font-size:14px;color:#3d4148;letter-spacing:0.7px;"><span class='sp'>2023-06-28</span></div>
<div class='t ' style="left:722px;top:764.76px;font-size:14px;color:#a6acb5;letter-spacing:0.3px;"><span class='sp'>16:41</span></div>
<div class='b ' style="left:766.5px;top:767.75px;width:11px;height:11px;"><svg width='11' height='11' viewBox='0 0 11 11'><path d='M1.5 9.5L9.5 1.5M3.5 1.5h6v6' fill='none' stroke='#9ea4ad' stroke-width='1.1'/></svg></div>
<div class='b spd' style="left:765px;top:780.25px;width:13px;height:3px;"></div>
<div class='t ' style="left:848px;top:764.76px;font-size:13px;color:#3d4148;letter-spacing:-0.86px;-webkit-text-stroke:0.15px currentColor;">오너</div>
<div class='t ' style="left:1040px;top:764.76px;font-size:14px;color:#3d4148;letter-spacing:-0.29px;"><span class='sp'>example_org</span></div>
<div class='t ' style="left:1168.5px;top:764.76px;font-size:13px;color:#3d4148;letter-spacing:-0.86px;-webkit-text-stroke:0.15px currentColor;">멤버</div>
<div class='b ' style="left:1297px;top:762.75px;width:49px;height:20px;box-sizing:border-box;border:1px solid #cfe0fa;border-radius:3px;background:#f7faff;"></div>
<div class='t ' style="left:1297px;top:764.76px;font-size:14px;color:#3a6fe2;width:49px;text-align:center;letter-spacing:-0.2px;"><span class='sp'>Joined</span></div>
<div class='b ' style="left:307px;top:791.00px;width:1093px;height:1px;background:#e8ebef;"></div>
</body></html>
